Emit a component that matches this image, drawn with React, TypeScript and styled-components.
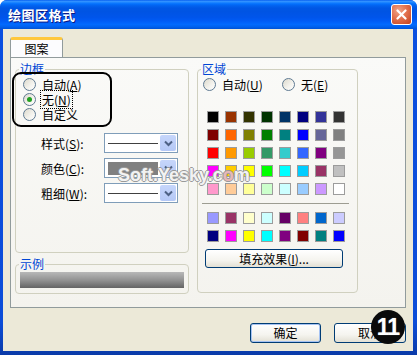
import styled, { createGlobalStyle } from 'styled-components';

const GlobalStyle = createGlobalStyle`
  html, body {
    margin: 0;
    padding: 0;
    width: 417px;
    height: 355px;
    overflow: hidden;
    background: #fff;
  }

  body {
    font-family: 'Noto Sans CJK SC', 'DejaVu Sans', sans-serif;
    font-size: 12px;
    color: #000;
  }
`;

const Window = styled.div`
  position: relative;
  width: 417px;
  height: 355px;
  display: flex;
  flex-direction: column;
  border-radius: 7px 7px 0 0;
  overflow: hidden;
  background: #0a4fe0;
`;

const TitleBar = styled.div`
  height: 29px;
  flex: none;
  display: flex;
  align-items: center;
  justify-content: space-between;
  padding: 0 5px 0 8px;
  background: linear-gradient(
    180deg,
    #0058ee 0%,
    #3593ff 4%,
    #288eff 7%,
    #127dff 10%,
    #036ffc 14%,
    #0262ee 20%,
    #0057e5 28%,
    #0054e3 40%,
    #0055eb 60%,
    #005bf5 72%,
    #026afe 84%,
    #0062ef 92%,
    #0052d6 100%
  );
`;

const Title = styled.span`
  color: #fff;
  font-weight: bold;
  font-size: 13px;
  letter-spacing: 0.5px;
  text-shadow: 1px 1px 0 #0a1883;
`;

const CloseButton = styled.div`
  width: 21px;
  height: 21px;
  box-sizing: border-box;
  border: 1px solid #fff;
  border-radius: 3px;
  background: radial-gradient(circle at 35% 30%, #f0a488 0%, #e2714e 45%, #c2401c 100%);
  display: flex;
  align-items: center;
  justify-content: center;
`;

const Frame = styled.div`
  flex: 1;
  display: flex;
  padding: 0 4px 4px 3px;
  background: linear-gradient(180deg, #0a4fe0 0%, #0b4cd8 90%, #0a3aa8 100%);
`;

const Client = styled.div`
  flex: 1;
  display: flex;
  flex-direction: column;
  background: #ece9d8;
  padding: 8px 7px 0 7px;
`;

const TabStrip = styled.div`
  display: flex;
  height: 20px;
`;

const Tab = styled.div`
  position: relative;
  z-index: 1;
  width: 53px;
  height: 20px;
  margin-bottom: -1px;
  box-sizing: border-box;
  border: 1px solid #919b9c;
  border-top: 3px solid #ffc83c;
  border-bottom: none;
  border-radius: 3px 3px 0 0;
  background: #fcfcfe;
  display: flex;
  align-items: center;
  justify-content: center;
  padding-top: 1px;
  line-height: 12px;
`;

const Panel = styled.div`
  height: 251px;
  box-sizing: border-box;
  border: 1px solid #919b9c;
  background: linear-gradient(180deg, #fafaf8 0%, #f4f3ee 100%);
  display: grid;
  grid-template-columns: 174px 161px;
  column-gap: 8px;
  align-items: start;
  padding: 5px 0 0 4px;
`;

const Column = styled.div`
  display: flex;
  flex-direction: column;
  gap: 5px;
`;

const Group = styled.fieldset<{ $height: number }>`
  margin: 0;
  padding: 0;
  min-width: 0;
  height: ${(p) => p.$height}px;
  box-sizing: border-box;
  border: 1px solid #d0d0bf;
  border-radius: 4px;
`;

const Legend = styled.legend`
  margin-left: 3px;
  padding: 0 1px;
  color: #0046d5;
  font-size: 12px;
  line-height: 12px;
`;

const GroupBody = styled.div<{ $left: number }>`
  display: flex;
  flex-direction: column;
  padding: 2px 0 0 ${(p) => p.$left}px;
`;

const RadioList = styled.div`
  position: relative;
  display: flex;
  flex-direction: column;
`;

const Annotation = styled.div`
  position: absolute;
  left: -11px;
  top: -5px;
  width: 100px;
  height: 55px;
  box-sizing: border-box;
  border: 2px solid #000;
  border-radius: 9px;
  pointer-events: none;
`;

const RadioRow = styled.label<{ $width?: number }>`
  display: flex;
  align-items: center;
  gap: 6px;
  height: 15px;
  line-height: 15px;
  width: ${(p) => (p.$width ? `${p.$width}px` : 'auto')};
`;

const RadioCircle = styled.span<{ $checked?: boolean }>`
  width: 13px;
  height: 13px;
  flex: none;
  box-sizing: border-box;
  border-radius: 50%;
  border: 1px solid #5f7a92;
  background: linear-gradient(135deg, #dcd9cc 0%, #f4f3ee 60%, #ffffff 100%);
  display: flex;
  align-items: center;
  justify-content: center;

  &::after {
    content: '';
    width: 5px;
    height: 5px;
    border-radius: 50%;
    background: ${(p) => (p.$checked ? '#21a121' : 'transparent')};
  }
`;

const RadioText = styled.span<{ $focused?: boolean }>`
  outline: ${(p) => (p.$focused ? '1px dotted #000' : 'none')};
  outline-offset: 1px;
`;

const OptionGrid = styled.div`
  display: grid;
  grid-template-columns: 63px 74px;
  row-gap: 5px;
  align-items: center;
  margin: 11px 0 0 18px;
`;

const Select = styled.div`
  width: 74px;
  height: 20px;
  box-sizing: border-box;
  border: 1px solid #7f9db9;
  background: #fff;
  display: flex;
  padding: 1px;
`;

const SelectValue = styled.div`
  flex: 1;
  display: flex;
  align-items: center;
  padding: 0 2px;
`;

const LineSample = styled.div`
  width: 100%;
  height: 1px;
  background: #404040;
`;

const ColorSample = styled.div<{ $color: string }>`
  width: 100%;
  height: 13px;
  background: ${(p) => p.$color};
`;

const ArrowButton = styled.div`
  width: 16px;
  border-radius: 2px;
  background: linear-gradient(180deg, #c6d6fb 0%, #b4c8f6 100%);
  display: flex;
  align-items: center;
  justify-content: center;
`;

const RadioPair = styled.div`
  display: flex;
`;

const SwatchGrid = styled.div<{ $top: number }>`
  display: grid;
  grid-template-columns: repeat(8, 12px);
  gap: 6px;
  margin: ${(p) => p.$top}px 0 0 4px;
`;

const Swatch = styled.div<{ $color: string }>`
  width: 12px;
  height: 12px;
  box-sizing: border-box;
  border: 1px solid #9c9c9c;
  background: ${(p) => p.$color};
`;

const Separator = styled.div`
  width: 147px;
  height: 1px;
  margin: 8px 0 0 -1px;
  background: #9d9d92;
`;

const PushButton = styled.div<{ $width: number; $default?: boolean }>`
  width: ${(p) => p.$width}px;
  height: 20px;
  box-sizing: border-box;
  border: 1px solid #003c74;
  border-radius: 3px;
  background: linear-gradient(180deg, #ffffff 0%, #f5f4ef 60%, #e3e0d4 100%);
  box-shadow: ${(p) => (p.$default ? 'inset 0 0 0 1px #a6c3f3' : 'none')};
  display: flex;
  align-items: center;
  justify-content: center;
  line-height: 12px;
`;

const FillButton = styled(PushButton)`
  height: 19px;
  margin: 7px 0 0 2px;
`;

const SampleBar = styled.div`
  width: 164px;
  height: 16px;
  margin: 2px 0 0 4px;
  background: linear-gradient(180deg, #b8b8b8 0%, #939393 50%, #646464 100%);
`;

const ButtonRow = styled.div`
  position: relative;
  display: flex;
  justify-content: flex-end;
  gap: 13px;
  margin-top: 15px;
`;

const Badge = styled.div`
  position: absolute;
  right: 1px;
  top: -13px;
  width: 34px;
  height: 34px;
  border-radius: 50%;
  background: #0a0a0a;
  color: #fff;
  font-family: 'Liberation Sans', Arial, sans-serif;
  font-weight: bold;
  font-size: 23px;
  letter-spacing: -1px;
  display: flex;
  align-items: center;
  justify-content: center;
  text-shadow: 0 0 1px #888;
`;

const Watermark = styled.div`
  position: absolute;
  left: 118px;
  top: 165px;
  font-family: 'Liberation Sans', Arial, sans-serif;
  font-weight: bold;
  font-size: 18px;
  color: rgba(255, 255, 255, 0.9);
  text-shadow: -1px 0 #9a9a9a, 1px 0 #9a9a9a, 0 -1px #9a9a9a, 0 1px #9a9a9a;
  pointer-events: none;
`;

const WatermarkO = styled.span`
  color: #e7b7b7;
`;

const paletteColors = [
  '#000000', '#993300', '#333300', '#003300', '#003366', '#000080', '#333399', '#333333',
  '#800000', '#ff6600', '#808000', '#008000', '#008080', '#0000ff', '#666699', '#808080',
  '#ff0000', '#ff9900', '#99cc00', '#339966', '#33cccc', '#3366ff', '#800080', '#969696',
  '#ff00ff', '#ffcc00', '#ffff00', '#00ff00', '#00ffff', '#00ccff', '#993366', '#c0c0c0',
  '#ff99cc', '#ffcc99', '#ffff99', '#ccffcc', '#ccffff', '#99ccff', '#cc99ff', '#ffffff',
];

const chartColors = [
  '#9999ff', '#993366', '#ffffcc', '#ccffff', '#660066', '#ff8080', '#0066cc', '#ccccff',
  '#000080', '#ff00ff', '#ffff00', '#00ffff', '#800080', '#800000', '#008080', '#0000ff',
];

const Chevron = () => (
  <svg width="9" height="7" viewBox="0 0 9 7">
    <path d="M1 1.5 L4.5 5 L8 1.5" fill="none" stroke="#4d6185" strokeWidth="2" />
  </svg>
);

const CloseIcon = () => (
  <svg width="11" height="11" viewBox="0 0 11 11">
    <path d="M1.5 1.5 L9.5 9.5 M9.5 1.5 L1.5 9.5" stroke="#fff" strokeWidth="2.2" strokeLinecap="round" />
  </svg>
);

const Mnemonic = ({ text, letter }: { text: string; letter: string }) => (
  <>
    {text}(<u>{letter}</u>)
  </>
);

const App = () => {
  return (
    <>
      <GlobalStyle />
      <Window>
        <TitleBar>
          <Title>绘图区格式</Title>
          <CloseButton>
            <CloseIcon />
          </CloseButton>
        </TitleBar>

        <Frame>
          <Client>
            <TabStrip>
              <Tab>图案</Tab>
            </TabStrip>

            <Panel>
              <Column>
                <Group $height={190}>
                  <Legend>边框</Legend>
                  <GroupBody $left={7}>
                    <RadioList>
                      <Annotation />
                      <RadioRow>
                        <RadioCircle />
                        <RadioText>
                          <Mnemonic text="自动" letter="A" />
                        </RadioText>
                      </RadioRow>
                      <RadioRow>
                        <RadioCircle $checked />
                        <RadioText $focused>
                          <Mnemonic text="无" letter="N" />
                        </RadioText>
                      </RadioRow>
                      <RadioRow>
                        <RadioCircle />
                        <RadioText>自定义</RadioText>
                      </RadioRow>
                    </RadioList>

                    <OptionGrid>
                      <span>
                        <Mnemonic text="样式" letter="S" />:
                      </span>
                      <Select>
                        <SelectValue>
                          <LineSample />
                        </SelectValue>
                        <ArrowButton>
                          <Chevron />
                        </ArrowButton>
                      </Select>

                      <span>
                        <Mnemonic text="颜色" letter="C" />:
                      </span>
                      <Select>
                        <SelectValue>
                          <ColorSample $color="#808080" />
                        </SelectValue>
                        <ArrowButton>
                          <Chevron />
                        </ArrowButton>
                      </Select>

                      <span>
                        <Mnemonic text="粗细" letter="W" />:
                      </span>
                      <Select>
                        <SelectValue>
                          <LineSample />
                        </SelectValue>
                        <ArrowButton>
                          <Chevron />
                        </ArrowButton>
                      </Select>
                    </OptionGrid>
                  </GroupBody>
                </Group>

                <Group $height={36}>
                  <Legend>示例</Legend>
                  <SampleBar />
                </Group>
              </Column>

              <Group $height={230}>
                <Legend>区域</Legend>
                <GroupBody $left={5}>
                  <RadioPair>
                    <RadioRow $width={79}>
                      <RadioCircle />
                      <span>
                        <Mnemonic text="自动" letter="U" />
                      </span>
                    </RadioRow>
                    <RadioRow>
                      <RadioCircle />
                      <span>
                        <Mnemonic text="无" letter="E" />
                      </span>
                    </RadioRow>
                  </RadioPair>

                  <SwatchGrid $top={19}>
                    {paletteColors.map((c, i) => (
                      <Swatch key={i} $color={c} />
                    ))}
                  </SwatchGrid>
                  <Separator />
                  <SwatchGrid $top={8}>
                    {chartColors.map((c, i) => (
                      <Swatch key={i} $color={c} />
                    ))}
                  </SwatchGrid>

                  <FillButton $width={138}>
                    <Mnemonic text="填充效果" letter="I" />
                    ...
                  </FillButton>
                </GroupBody>
              </Group>
            </Panel>

            <ButtonRow>
              <PushButton $width={71} $default>
                确定
              </PushButton>
              <PushButton $width={72}>取消</PushButton>
              <Badge>11</Badge>
            </ButtonRow>
          </Client>
        </Frame>

        <Watermark>
          Soft.Yesky.c<WatermarkO>o</WatermarkO>m
        </Watermark>
      </Window>
    </>
  );
};

export default App;
